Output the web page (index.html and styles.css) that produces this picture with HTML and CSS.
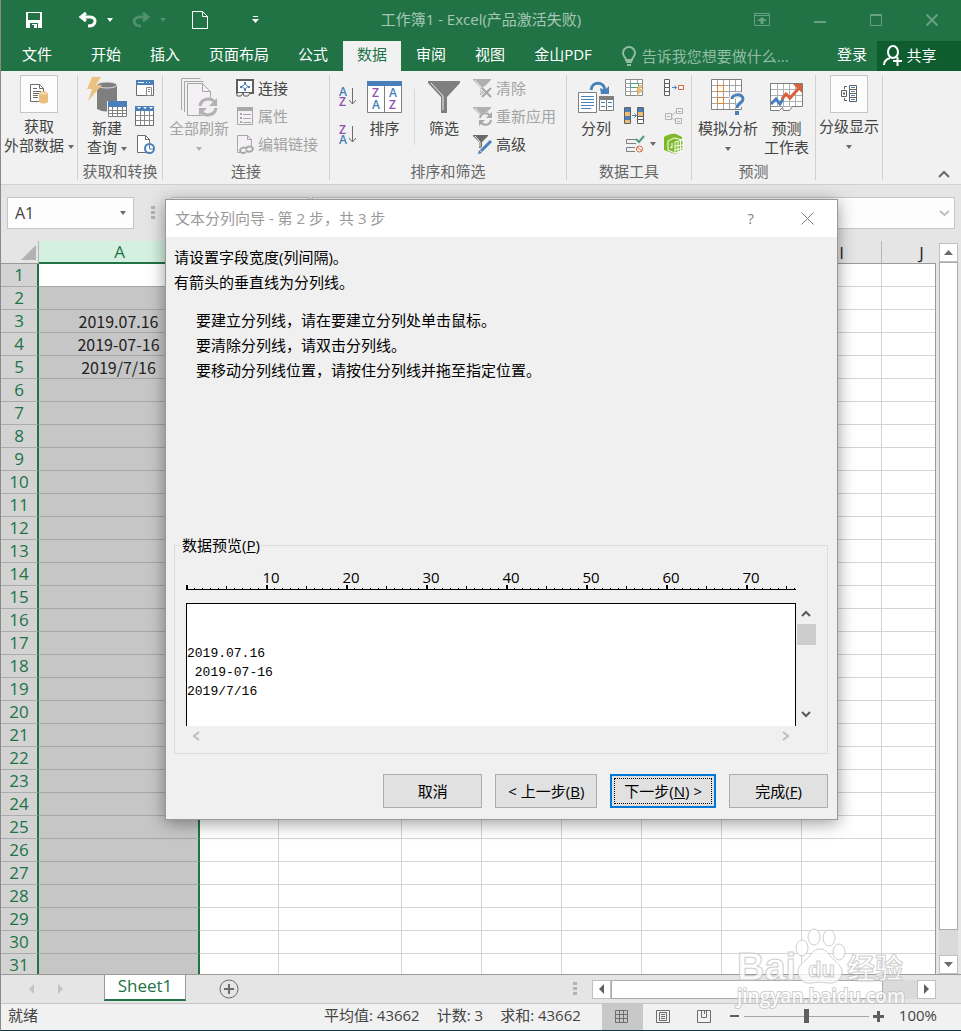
FILE: index.html
```html
<!DOCTYPE html>
<html lang="zh-CN">

<head>
    <meta charset="UTF-8">
    <meta name="viewport" content="width=device-width, initial-scale=1.0">
    <title>工作簿1 - Excel</title>
    <link rel="stylesheet" href="styles.css">
</head>

<body>
    <header class="titlebar">
        <div class="quick-access">
            <button type="button" aria-label="保存">
                <svg width="16" height="16" viewBox="0 0 16 16"><path d="M0 0h16v16H0z" fill="#fff"/><path d="M2 1h12v7H2zM4 11h8v5H4z" fill="#217346"/><path d="M6 12h5v4H8v-2H6z" fill="#fff"/><path d="M6 13h2v3H6z" fill="#217346"/></svg>
            </button>
            <button type="button" class="undo" aria-label="撤消">
                <svg width="20" height="16" viewBox="0 0 20 16" fill="none" stroke="#fff" stroke-width="3"><path d="M3 5h9c7 0 7 9-2 9"/><path d="M8 1L3 5l5 4" stroke-width="3"/></svg>
                <span class="caret light"></span>
            </button>
            <button type="button" class="redo" aria-label="恢复">
                <svg width="20" height="16" viewBox="0 0 20 16" fill="none" stroke="#4f9070" stroke-width="3"><path d="M17 5H9c-8 0-8 9 1 9"/><path d="M12 1l5 4-5 4"/></svg>
                <span class="caret dim"></span>
            </button>
            <button type="button" class="new" aria-label="新建">
                <svg width="16" height="18" viewBox="0 0 16 18" fill="none" stroke="#fff"><path d="M.5.5h10l5 5v12H.5zM10.500.5v5h5" /></svg>
            </button>
            <button type="button" class="customize" aria-label="自定义快速访问工具栏">
                <svg width="7" height="8" viewBox="0 0 7 8" fill="#fff"><path d="M1 0h5v1H1zM0 3h7L3.500 7z"/></svg>
            </button>
        </div>
        <h1>工作簿1 - Excel(产品激活失败)</h1>
        <div class="window-buttons">
            <button type="button" aria-label="功能区显示选项">
                <svg width="16" height="13" viewBox="0 0 16 13"><path d="M.5.5h15v12H.5zM1 2.500h14" fill="none" stroke="#67a183"/><path d="M8 4l5 4h-3.500v3h-3V8H3z" fill="#67a183"/></svg>
            </button>
            <button type="button" aria-label="最小化">
                <svg width="12" height="13" viewBox="0 0 12 13"><path d="M0 8h12v2H0z" fill="#67a183"/></svg>
            </button>
            <button type="button" aria-label="最大化">
                <svg width="12" height="12" viewBox="0 0 12 12"><path d="M.5.5h11v11H.5zM1 1.500h10" fill="none" stroke="#67a183"/></svg>
            </button>
            <button type="button" aria-label="关闭">
                <svg width="12" height="12" viewBox="0 0 12 12"><path d="M.5.5l11 11M11.500.5l-11 11" stroke="#67a183" stroke-width="2"/></svg>
            </button>
        </div>
    </header>

    <nav class="tabs">
        <a href="#" class="file">文件</a>
        <a href="#">开始</a>
        <a href="#">插入</a>
        <a href="#">页面布局</a>
        <a href="#">公式</a>
        <a href="#" class="active">数据</a>
        <a href="#">审阅</a>
        <a href="#">视图</a>
        <a href="#">金山PDF</a>
        <label class="tell-me">
            <svg width="14" height="19" viewBox="0 0 14 19" fill="none" stroke="#91bda4" stroke-width="2"><path d="M4 13c0-3-3-3-3-7a6 6 0 0 1 12 0c0 4-3 4-3 7zM4 15h6M5 18h4"/></svg>
            <input type="text" placeholder="告诉我您想要做什么..." aria-label="告诉我您想要做什么">
        </label>
        <a href="#" class="login">登录</a>
        <button type="button" class="share">
            <svg width="20" height="21" viewBox="0 0 20 21" fill="none" stroke="#fff" stroke-width="2"><ellipse cx="10" cy="7" rx="5" ry="6"/><path d="M1 20c0-4 3-6 6-7M10 16h9M14.500 12v9"/></svg>
            共享
        </button>
    </nav>

    <section class="ribbon">
        <div class="group external">
            <div class="tools">
                <button type="button" class="big boxed">
                    <span class="icon-box">
                        <svg width="18" height="20" viewBox="0 0 18 20"><path d="M.5.5h9l4 4v13H.5z" fill="#fff" stroke="#6d6d6d"/><path d="M9.500.5v4h4M3 7.500h8M3 9.500h8M3 11.500h5M3 13.500h5M3 4.500h4" fill="none" stroke="#6d6d6d"/><path d="M9 9h9v9q-4 3-9 0z" fill="#e8bf7c"/><ellipse cx="13.500" cy="9.500" rx="4" ry="1.500" fill="#f6deb4" stroke="#e8bf7c"/></svg>
                    </span>
                    <span>获取</span>
                    <span>外部数据<i class="caret"></i></span>
                </button>
            </div>
        </div>

        <div class="group transform">
            <div class="tools">
                <button type="button" class="big">
                    <span class="icon">
                        <svg width="40" height="40" viewBox="0 0 40 40"><path d="M10 8v24q9 5 20 0V8z" fill="#7f7f7f"/><ellipse cx="20" cy="8" rx="10" ry="3" fill="#7f7f7f" stroke="#dcdcdc"/><path d="M5 0h9L9 8h6L1 24l4-12H0z" fill="#eac282"/><path d="M20 24h20v16H20z" fill="#f0f0f0"/><path d="M21.500 25.500h18v14h-18z" fill="#fff" stroke="#7f7f7f"/><path d="M21 24h19v6H21z" fill="#4a80b9"/><path d="M22 33.500h17M22 36.500h17M25.500 30v9M30.500 30v9M35.500 30v9" stroke="#7f7f7f"/></svg>
                    </span>
                    <span>新建</span>
                    <span>查询<i class="caret"></i></span>
                </button>
                <div class="stack">
                    <button type="button" class="small" aria-label="显示查询">
                        <svg width="20" height="18" viewBox="0 0 20 18"><path d="M1.500 1.500h17v15h-17z" fill="#fff" stroke="#6d6d6d"/><path d="M1 1h18v5H1z" fill="#4a80b9"/><path d="M3 3h6v1H3zM11 3h1v1h-1zM14 3h1v1h-1z" fill="#fff"/><path d="M11.500 8.500h5v8h-5zM13 10.500h2M13 12.500h2" fill="none" stroke="#8a8a8a"/></svg>
                    </button>
                    <button type="button" class="small" aria-label="从表格">
                        <svg width="20" height="20" viewBox="0 0 20 20"><path d="M.5.5h18v19H.5z" fill="#fff" stroke="#6d6d6d"/><path d="M0 0h19v5H0z" fill="#4a80b9"/><path d="M2 1h4L4 3zM8 1h4l-2 2zM14 1h4l-2 2z" fill="#fff"/><path d="M1 9.500h17M1 14.500h17M5.500 5v14M9.500 5v14M14.500 5v14" stroke="#8a8a8a"/></svg>
                    </button>
                    <button type="button" class="small" aria-label="最近使用的源">
                        <svg width="20" height="20" viewBox="0 0 20 20"><path d="M2.500 1.500h8l4 4v13h-12z" fill="#fff" stroke="#6d6d6d"/><path d="M10.500 1.500v4h4" fill="none" stroke="#6d6d6d"/><circle cx="14.500" cy="14.500" r="4.500" fill="#fff" stroke="#4a80b9" stroke-width="2"/><path d="M14.500 11v4H18" fill="none" stroke="#4a80b9"/></svg>
                    </button>
                </div>
            </div>
            <h2>获取和转换</h2>
        </div>

        <div class="group links">
            <div class="tools">
                <button type="button" class="big" disabled>
                    <span class="icon">
                        <svg width="37" height="38" viewBox="0 0 37 38"><path d="M.5 32V.5h19M3.500 34V3.500h19" fill="none" stroke="#a8a8a8"/><path d="M6.500 5.500h15l8 8v24h-23z" fill="#f5f0f6" stroke="#a8a8a8"/><path d="M21.500 5.500v8h8" fill="none" stroke="#a8a8a8"/><circle cx="27" cy="29" r="10" fill="#f0f0f0"/><path d="M19 28c1-8 12-9 15-3M35 30c-1 8-12 9-15 3" fill="none" stroke="#b2b2b2" stroke-width="3"/><path d="M36 20v8h-8zM18 38v-8h8z" fill="#b2b2b2"/></svg>
                    </span>
                    <span>全部刷新</span>
                    <span><i class="caret alone pale"></i></span>
                </button>
                <div class="stack">
                    <button type="button" class="small">
                        <svg width="18" height="18" viewBox="0 0 18 18"><path d="M1 1h16v13H1z" fill="#fff" stroke="#5f5f5f" stroke-width="2"/><path d="M9 5l3 2.500L9 10 6 7.500z" fill="none" stroke="#4a80b9"/><path d="M8 3h2v2H8zM8 10h2v2H8zM4 7h2v2H4zM12 7h2v2h-2z" fill="#4a80b9"/><path d="M1 14v3h4l2-3 1 3h4l2-3" fill="#f1f1f1" stroke="#5f5f5f"/></svg>
                        连接
                    </button>
                    <button type="button" class="small" disabled>
                        <svg width="18" height="18" viewBox="0 0 18 18"><path d="M1.500.5h15v17h-15z" fill="#f5f0f6" stroke="#a8a8a8"/><path d="M1 0h16v4H1z" fill="#a8a8a8"/><path d="M7 7.500h8M7 11.500h8M7 15.500h8" stroke="#a8a8a8"/><path d="M4 6h2v2H4zM4 10h2v2H4zM4 14h2v2H4z" fill="#a8a8a8"/></svg>
                        属性
                    </button>
                    <button type="button" class="small" disabled>
                        <svg width="18" height="19" viewBox="0 0 18 19"><path d="M1.500 17.500V.5h10l4 4v7" fill="#f5f0f6" stroke="#a8a8a8"/><path d="M11.500.5v4h4M1.500 17.500h3" fill="none" stroke="#a8a8a8"/><path d="M10 17c-3 2-6 1-6-2 1-3 5-3 7-1M10 13c3-3 7-1 7 1-1 3-5 4-7 1" fill="none" stroke="#a8a8a8" stroke-width="2"/></svg>
                        编辑链接
                    </button>
                </div>
            </div>
            <h2>连接</h2>
        </div>

        <div class="group sort">
            <div class="tools">
                <div class="az-stack">
                    <button type="button" aria-label="升序">
                        <svg width="18" height="20" viewBox="0 0 18 20"><text x="0" y="9" class="az a">A</text><text x="0" y="19" class="az z">Z</text><path d="M13.500 1v16M10 13l3.500 4 3.500-4" fill="none" stroke="#6d6d6d"/></svg>
                    </button>
                    <button type="button" aria-label="降序">
                        <svg width="18" height="20" viewBox="0 0 18 20"><text x="0" y="9" class="az z">Z</text><text x="0" y="19" class="az a">A</text><path d="M13.500 1v16M10 13l3.500 4 3.500-4" fill="none" stroke="#6d6d6d"/></svg>
                    </button>
                </div>
                <button type="button" class="big">
                    <span class="icon">
                        <svg width="35" height="32" viewBox="0 0 35 32"><path d="M.5.5h34v31H.5z" fill="#fff" stroke="#7f7f7f"/><path d="M0 0h35v5H0z" fill="#4a80b9"/><path d="M17.500 5v26" stroke="#7f7f7f"/><text x="5" y="16" class="az z">Z</text><text x="5" y="28" class="az a">A</text><text x="22" y="16" class="az a">A</text><text x="22" y="28" class="az z">Z</text></svg>
                    </span>
                    <span>排序</span>
                </button>
                <div class="divider"></div>
                <button type="button" class="big filter">
                    <span class="icon">
                        <svg width="32" height="32" viewBox="0 0 32 32"><path d="M0 0h32v2L19 16v16h-6V16L0 2z" fill="#7f7f7f"/><path d="M3 2l12 13v14" fill="none" stroke="#f0f0f0" stroke-width="1"/></svg>
                    </span>
                    <span>筛选</span>
                </button>
                <div class="stack">
                    <button type="button" class="small" disabled>
                        <svg width="19" height="19" viewBox="0 0 19 19"><path d="M0 0h18v1l-7 7v8H7V8L0 1z" fill="#b0b0b0"/><path d="M2 1l6 7v7" fill="none" stroke="#f0f0f0"/><path d="M9 9l9 9M18 9l-9 9" stroke="#f0f0f0" stroke-width="4"/><path d="M9 9l9 9M18 9l-9 9" stroke="#a5a5a5" stroke-width="2"/></svg>
                        清除
                    </button>
                    <button type="button" class="small" disabled>
                        <svg width="19" height="19" viewBox="0 0 19 19"><path d="M0 0h18v1l-7 7v8H7V8L0 1z" fill="#b0b0b0"/><path d="M2 1l6 7v7" fill="none" stroke="#f0f0f0"/><circle cx="12.500" cy="12" r="7" fill="#f0f0f0"/><path d="M7 11c1-6 8-6 10-2M18 13c-1 6-8 6-10 2" fill="none" stroke="#a8a8a8" stroke-width="2"/><path d="M19 5v6h-6zM6 19v-6h6z" fill="#a8a8a8"/></svg>
                        重新应用
                    </button>
                    <button type="button" class="small">
                        <svg width="19" height="19" viewBox="0 0 19 19"><path d="M0 0h15v1L9 7v6H6V7L0 1z" fill="#6b6b6b"/><path d="M2 1l5 6v5" fill="none" stroke="#f0f0f0"/><path d="M18 6L7 17" stroke="#f0f0f0" stroke-width="5"/><path d="M18 6L8 16" stroke="#4a80b9" stroke-width="3"/><path d="M5 19l1-4 3 3z" fill="#4a80b9"/></svg>
                        高级
                    </button>
                </div>
            </div>
            <h2>排序和筛选</h2>
        </div>

        <div class="group data-tools">
            <div class="tools">
                <button type="button" class="big">
                    <span class="icon">
                        <svg width="36" height="32" viewBox="0 0 36 32"><path d="M.5 11.500h18v20H.5z" fill="#fff" stroke="#7f7f7f"/><path d="M3 15.500h13M3 18.500h13M3 21.500h13M3 24.500h13M3 27.500h10" stroke="#4a80b9"/><path d="M21.500 15.500h14v14h-14z" fill="#fff" stroke="#7f7f7f"/><path d="M21 15h15v4H21z" fill="#7f7f7f"/><path d="M28.500 19v10" stroke="#7f7f7f"/><path d="M23 21.500h4M23 25.500h4M30 21.500h4M30 25.500h4" stroke="#4a80b9"/><path d="M13 9c1-9 13-9 14 0" fill="none" stroke="#4a80b9" stroke-width="3"/><path d="M22 7l5 2 4-4v8h-8z" fill="#4a80b9"/></svg>
                    </span>
                    <span>分列</span>
                </button>
                <div class="stack">
                    <button type="button" class="small" aria-label="快速填充">
                        <svg width="20" height="18" viewBox="0 0 20 18"><path d="M1.500.5h17v16h-17z" fill="#fff" stroke="#8a8a8a"/><path d="M1 4.500h17M1 8.500h17M1 12.500h17M6.500 1v15M13.500 1v15" stroke="#a5a5a5"/><path d="M6.500 4.500h8v4h-8z" fill="#fff" stroke="#4c9f7d"/><path d="M15 6h4l-3 4h4l-8 8 3-6h-3z" fill="#edbd72"/></svg>
                    </button>
                    <button type="button" class="small" aria-label="删除重复值">
                        <svg width="20" height="18" viewBox="0 0 20 18"><path d="M.5.5h6v16h-6zM13.500.5h6v16h-6z" fill="#fff" stroke="#5f5f5f"/><path d="M1 1h5v4H1zM1 9h5v4H1zM14 1h5v4h-5z" fill="#4a80b9"/><path d="M1 5h5v4H1zM1 13h5v3H1zM14 5h5v4h-5z" fill="#edbd72"/><path d="M14 9.500h5M14 12.500h5" stroke="#5f5f5f"/><path d="M8 8.500h4M10.500 6.500l2 2-2 2" fill="none" stroke="#4a80b9"/></svg>
                    </button>
                    <button type="button" class="small" aria-label="数据验证">
                        <svg width="20" height="18" viewBox="0 0 20 18"><path d="M2.500 4.500H12M2.500 4.500v4H12M2.500 12.500H11M2.500 12.500v4H11" fill="none" stroke="#7f7f7f"/><path d="M12 4l3 3 5-6" fill="none" stroke="#4c9f7d" stroke-width="2"/><circle cx="15.500" cy="14" r="3" fill="#fff" stroke="#d9603b" stroke-width="1"/><path d="M13 12l5 4" stroke="#d9603b"/></svg>
                        <i class="caret"></i>
                    </button>
                </div>
                <div class="stack">
                    <button type="button" class="small" aria-label="合并计算">
                        <svg width="22" height="18" viewBox="0 0 22 18"><path d="M1.500.5h5v16h-5zM2 4.500h4M2 8.500h4M2 12.500h4" fill="#fff" stroke="#5f5f5f"/><path d="M9 8.500h4M11.500 6.500l2 2-2 2" fill="none" stroke="#4a80b9"/><path d="M15.500 6.500h5v4h-5z" fill="#fff" stroke="#d9603b" stroke-width="1"/></svg>
                    </button>
                    <button type="button" class="small" disabled aria-label="关系">
                        <svg width="22" height="18" viewBox="0 0 22 18" fill="none" stroke="#b0b0b0"><path d="M2.500 6.500h6v6h-6zM13.500 1.500h6v5h-6zM12.500 11.500h6v5h-6zM8.500 9l5-5M8.500 10l4 4"/><path d="M4 9.500h3M15 4.500h3M14 14.500h3"/></svg>
                    </button>
                    <button type="button" class="small" aria-label="管理数据模型">
                        <svg width="22" height="20" viewBox="0 0 22 20"><path d="M1 3q7-4 12-3l6 3v13l-7 4-11-4z" fill="#7db928"/><path d="M5 7l6-3 9 2v10l-8 3-7-3z" fill="#7db928" stroke="#fff"/><path d="M12 8v11M12 8l8-2M12 12l8-1M12 16l8-2M15 8v10M17.500 7v10M9 9v5l-2-1" fill="none" stroke="#fff"/></svg>
                    </button>
                </div>
            </div>
            <h2>数据工具</h2>
        </div>

        <div class="group forecast">
            <div class="tools">
                <button type="button" class="big">
                    <span class="icon">
                        <svg width="35" height="36" viewBox="0 0 35 36"><path d="M.5.5h30v30H.5z" fill="#fff" stroke="#7f7f7f"/><path d="M6.500 1v29M12.500 1v29M18.500 1v29M24.500 1v29M1 6.500h29M1 12.500h29M1 18.500h29M1 24.500h29" stroke="#a5a5a5"/><path d="M6.500 6.500h6v6h-6zM6.500 18.500h6v6h-6z" fill="#fff" stroke="#e5802b"/><path d="M21 20c0-5 12-6 12 0 0 4-6 4-6 9" fill="none" stroke="#f0f0f0" stroke-width="6"/><path d="M21 20c0-5 11-6 11 0 0 4-6 4-6 9" fill="none" stroke="#4a80b9" stroke-width="3"/><path d="M24 32h4v4h-4z" fill="#4a80b9"/></svg>
                    </span>
                    <span>模拟分析</span>
                    <span><i class="caret alone"></i></span>
                </button>
                <button type="button" class="big">
                    <span class="icon">
                        <svg width="34" height="30" viewBox="0 0 34 30"><path d="M.5 1.500h32v23H.5z" fill="#fff" stroke="#7f7f7f"/><path d="M7.500 2v22M13.500 2v22M19.500 2v22M25.500 2v22M1 7.500h31M1 13.500h31M1 19.500h31" stroke="#b0b0b0"/><path d="M.5 25v3.500h9l3-3 1 3h6l3-4" fill="#fff" stroke="#7f7f7f"/><path d="M1 22l5-5 4 5 3-5" fill="none" stroke="#4a80b9" stroke-width="3"/><path d="M12 17l4-5 4 4 9-10" fill="none" stroke="#d9603b" stroke-width="3"/><path d="M23 2h9v9l-3-3-3-3z" fill="#d9603b"/></svg>
                    </span>
                    <span>预测</span>
                    <span>工作表</span>
                </button>
            </div>
            <h2>预测</h2>
        </div>

        <div class="group outline">
            <div class="tools">
                <button type="button" class="big boxed">
                    <span class="icon-box">
                        <svg width="18" height="18" viewBox="0 0 18 18" fill="none" stroke="#5f5f5f"><path d="M9.500.5h7v16h-7zM10 4.500h6M10 8.500h6M10 12.500h6" fill="#fff"/><path d="M7 1.500H4.500V4M7 15.500H4.500V13M1.500 5.500h5v6h-5zM3 8.500h2M4 7v3"/><path d="M11 2.500h4M11 6.500h4M11 10.500h4M11 14.500h4" stroke="#4a80b9"/></svg>
                    </span>
                    <span>分级显示</span>
                    <span><i class="caret alone"></i></span>
                </button>
            </div>
        </div>

        <button type="button" class="collapse" aria-label="折叠功能区">
            <svg width="12" height="8" viewBox="0 0 12 8"><path d="M1 7l5-5 5 5" fill="none" stroke="#6a6a6a" stroke-width="2"/></svg>
        </button>
    </section>

    <section class="formula-bar">
        <label class="name-box">
            <input type="text" value="A1" aria-label="名称框">
            <i class="caret"></i>
        </label>
        <span class="dots"></span>
        <div class="formula-buttons"></div>
        <label class="formula-input">
            <input type="text" aria-label="编辑栏">
            <svg width="9" height="7" viewBox="0 0 9 7"><path d="M0 1l4.500 4L9 1" fill="none" stroke="#bdbdbd" stroke-width="2"/></svg>
        </label>
    </section>

    <main class="sheet-area">
        <div class="sheet">
            <table>
                <colgroup>
                    <col class="col-head">
                    <col class="col-a">
                    <col class="col-b">
                    <col class="col-c">
                    <col class="col-std" span="7">
                </colgroup>
                <thead>
                    <tr>
                        <th class="corner"><svg width="15" height="15" viewBox="0 0 15 15"><path d="M15 0v15H0z" fill="#b2b2b2"/></svg></th>
                        <th class="selected">A</th>
                        <th>B</th>
                        <th>C</th>
                        <th>D</th>
                        <th>E</th>
                        <th>F</th>
                        <th>G</th>
                        <th>H</th>
                        <th>I</th>
                        <th>J</th>
                    </tr>
                </thead>
                <tbody id="rows"></tbody>
            </table>
        </div>
        <div class="vscroll">
            <button type="button" aria-label="向上滚动"><svg width="9" height="5" viewBox="0 0 9 5"><path d="M4.500 0L9 5H0z" fill="#6a6a6a"/></svg></button>
            <div class="thumb"></div>
            <div class="track"></div>
            <button type="button" aria-label="向下滚动"><svg width="9" height="5" viewBox="0 0 9 5"><path d="M4.500 5L9 0H0z" fill="#6a6a6a"/></svg></button>
        </div>
    </main>

    <section class="sheet-tabs">
        <div class="sheet-nav">
            <svg width="5" height="10" viewBox="0 0 5 10"><path d="M5 0v10L0 5z" fill="#c3c3c3"/></svg>
            <svg width="5" height="10" viewBox="0 0 5 10"><path d="M0 0v10l5-5z" fill="#c3c3c3"/></svg>
        </div>
        <a href="#" class="sheet-tab">Sheet1</a>
        <button type="button" class="add-sheet" aria-label="新工作表">
            <svg width="20" height="20" viewBox="0 0 20 20" fill="none" stroke="#6d6d6d"><circle cx="10" cy="10" r="9" stroke-width="1"/><path d="M5 10h10M10 5v10" stroke-width="2"/></svg>
        </button>
        <span class="dots"></span>
        <div class="hscroll">
            <button type="button" aria-label="向左滚动"><svg width="5" height="10" viewBox="0 0 5 10"><path d="M5 0v10L0 5z" fill="#5f5f5f"/></svg></button>
            <div class="thumb"></div>
            <div class="track"></div>
            <button type="button" aria-label="向右滚动"><svg width="5" height="10" viewBox="0 0 5 10"><path d="M0 0v10l5-5z" fill="#5f5f5f"/></svg></button>
        </div>
    </section>

    <footer class="status">
        <span class="ready">就绪</span>
        <div class="totals">
            <span>平均值: 43662</span>
            <span>计数: 3</span>
            <span>求和: 43662</span>
        </div>
        <div class="views">
            <button type="button" class="active" aria-label="普通">
                <svg width="14" height="13" viewBox="0 0 14 13" fill="none" stroke="#6d6d6d"><path d="M.5.5h12v12H.5zM4.500 1v11M8.500 1v11M1 4.500h11M1 8.500h11"/></svg>
            </button>
            <button type="button" aria-label="页面布局">
                <svg width="14" height="13" viewBox="0 0 14 13" fill="none" stroke="#6d6d6d"><path d="M.5.5h13v12H.5zM3.500 2.500h7v8h-7zM5 4.500h4M5 6.500h4M5 8.500h4"/></svg>
            </button>
            <button type="button" aria-label="分页预览">
                <svg width="14" height="13" viewBox="0 0 14 13" fill="none" stroke="#6d6d6d"><path d="M.5.5h13v12H.5zM4.500 1v6.500h5V1M7.500 1v3"/></svg>
            </button>
        </div>
        <div class="zoom">
            <button type="button" aria-label="缩小"><svg width="10" height="10" viewBox="0 0 10 10"><path d="M0 4h9v2H0z" fill="#5f5f5f"/></svg></button>
            <input type="range" min="0" max="100" value="50" aria-label="缩放">
            <button type="button" aria-label="放大"><svg width="11" height="11" viewBox="0 0 11 11"><path d="M0 4h4V0h3v4h4v3H7v4H4V7H0z" fill="#5f5f5f"/></svg></button>
            <span class="percent">100%</span>
        </div>
    </footer>

    <div class="dialog" role="dialog" aria-labelledby="wizard-title">
        <div class="dialog-title">
            <span id="wizard-title">文本分列向导 - 第 2 步，共 3 步</span>
            <button type="button" class="help" aria-label="帮助">?</button>
            <button type="button" class="close" aria-label="关闭">
                <svg width="13" height="13" viewBox="0 0 13 13"><path d="M.5.5l12 12M12.500.5l-12 12" stroke="#7f7f7f"/></svg>
            </button>
        </div>
        <div class="dialog-body">
            <p>请设置字段宽度(列间隔)。<br>有箭头的垂直线为分列线。</p>
            <p class="hints">要建立分列线，请在要建立分列处单击鼠标。<br>要清除分列线，请双击分列线。<br>要移动分列线位置，请按住分列线并拖至指定位置。</p>
            <fieldset>
                <legend>数据预览(<u>P</u>)</legend>
                <div class="preview">
                    <div class="ruler">
                        <span>10</span>
                        <span>20</span>
                        <span>30</span>
                        <span>40</span>
                        <span>50</span>
                        <span>60</span>
                        <span>70</span>
                    </div>
                    <pre>2019.07.16
 2019-07-16
2019/7/16</pre>
                    <div class="preview-vscroll">
                        <svg width="10" height="7" viewBox="0 0 10 7"><path d="M1 6l4-4 4 4" fill="none" stroke="#5a5a5a" stroke-width="2"/></svg>
                        <div class="preview-thumb"></div>
                        <svg width="10" height="7" viewBox="0 0 10 7"><path d="M1 1l4 4 4-4" fill="none" stroke="#5a5a5a" stroke-width="2"/></svg>
                    </div>
                    <div class="preview-hscroll">
                        <svg width="8" height="10" viewBox="0 0 8 10"><path d="M7 1L2 5l5 4" fill="none" stroke="#bdbdbd" stroke-width="2"/></svg>
                        <svg width="8" height="10" viewBox="0 0 8 10"><path d="M1 1l5 4-5 4" fill="none" stroke="#bdbdbd" stroke-width="2"/></svg>
                    </div>
                </div>
            </fieldset>
            <div class="actions">
                <button type="button">取消</button>
                <button type="button">&lt; 上一步(<u>B</u>)</button>
                <button type="button" class="default">下一步(<u>N</u>) &gt;</button>
                <button type="button">完成(<u>F</u>)</button>
            </div>
        </div>
    </div>

    <div class="watermark">
        <svg width="176" height="86" viewBox="0 0 176 86">
            <g fill="#fff" stroke="#c4c4c4">
                <text x="1" y="52" class="logo">Bai</text>
                <ellipse cx="66" cy="20" rx="6" ry="8"/>
                <ellipse cx="78" cy="9" rx="6" ry="8"/>
                <ellipse cx="93" cy="10" rx="6" ry="8"/>
                <ellipse cx="103" cy="24" rx="6" ry="8"/>
                <path d="M84 21c-7 0-9 6-13 10-5 4-9 7-9 13 0 8 7 12 14 11 5-1 10-1 15 0 8 1 15-3 15-11 0-6-5-9-9-13-5-5-6-10-13-10z"/>
                <text x="72" y="49" class="logo-du">du</text>
                <text x="111" y="51" class="logo-cn">经验</text>
                <text x="1" y="75" class="logo-url">jingyan.baidu.com</text>
            </g>
        </svg>
    </div>

    <script src="script.js"></script>
</body>

</html>
```

FILE: styles.css
```css
* {
    box-sizing: border-box;
}

body {
    position: relative;
    display: flex;
    flex-direction: column;
    height: 100vh;
    margin: 0;
    overflow: hidden;
    border-left: 1px solid #8a8a8a;
    border-bottom: 1px solid #0d3b40;
    background-color: #e5e5e5;
    color: #444;
    font-family: "Open Sans", "Noto Sans CJK SC", sans-serif;
    font-size: 15px;
    line-height: 19px;
}

button, input {
    margin: 0;
    padding: 0;
    border: none;
    background: none;
    color: inherit;
    font: inherit;
}

button {
    display: flex;
    align-items: center;
    justify-content: center;
}

a {
    color: inherit;
    text-decoration: none;
}

svg {
    display: block;
    flex: none;
    overflow: visible;
}

h1, h2, p, pre {
    margin: 0;
    font-weight: normal;
}

.caret {
    display: inline-block;
    border: 3px solid transparent;
    border-top: 4px solid #6a6a6a;
    border-bottom: none;
    vertical-align: middle;
}

.caret.light {
    border-top-color: #fff;
}

.caret.dim {
    border-top-color: #4f9070;
}

.caret.pale {
    border-top-color: #b0b0b0;
}

.dots {
    width: 4px;
    height: 14px;
    background: repeating-linear-gradient(#b2b2b2 0 3px, transparent 3px 5px);
}

/* title bar */
.titlebar {
    display: grid;
    grid-template-columns: 1fr auto 1fr;
    align-items: center;
    flex: none;
    height: 41px;
    padding-bottom: 2px;
    background-color: #217346;
    color: #a6c7b5;
}

.titlebar h1 {
    font-size: 15px;
}

.quick-access {
    display: flex;
    align-items: center;
    padding-left: 25px;
}

.quick-access button {
    gap: 9px;
}

.undo {
    padding-left: 36px;
}

.redo {
    padding-left: 18px;
}

.new {
    padding-left: 26px;
}

.customize {
    padding-left: 44px;
}

.window-buttons {
    display: flex;
    justify-content: flex-end;
    gap: 44px;
    padding-right: 23px;
}

/* tabs */
.tabs {
    display: flex;
    flex: none;
    gap: 1px;
    height: 30px;
    background-color: #217346;
    color: #fff;
    line-height: 26px;
}

.tabs a {
    padding: 0 14px;
    white-space: nowrap;
}

.tabs .file {
    padding: 0 24px 0 21px;
}

.tabs .active {
    background-color: #f1f1f1;
    color: #217346;
}

.tell-me {
    display: flex;
    flex: 1;
    align-items: center;
    gap: 6px;
    min-width: 0;
    padding-left: 15px;
}

.tell-me input {
    flex: 1;
    min-width: 0;
}

.tell-me input::placeholder {
    color: #91bda4;
    opacity: 1;
}

.tabs .login {
    padding: 0 9px;
}

.share {
    gap: 3px;
    width: 84px;
    padding: 0 18px 2px 0;
    background-color: #0f5c2e;
}

/* ribbon */
.ribbon {
    display: flex;
    flex: none;
    height: 114px;
    padding: 4px 0;
    border-bottom: 1px solid #d0d0d0;
    background-color: #f1f1f1;
}

.group {
    display: flex;
    flex: none;
    flex-direction: column;
    border-right: 1px solid #d0d0d0;
}

.group h2 {
    color: #666;
    font-size: 15px;
    line-height: 17px;
    text-align: center;
}

.tools {
    display: flex;
    flex: 1;
}

.external {
    width: 77px;
}

.transform {
    width: 85px;
}

.links {
    width: 167px;
}

.sort {
    width: 237px;
}

.data-tools {
    width: 125px;
}

.forecast {
    width: 124px;
}

.outline {
    width: 67px;
}

.big {
    flex-direction: column;
    justify-content: flex-start;
    white-space: nowrap;
}

.big span {
    min-height: 19px;
}

.big .caret {
    margin-left: 4px;
}

.big .alone {
    margin-left: 0;
}

.big .icon {
    display: flex;
    align-items: center;
    height: 44px;
}

.boxed {
    flex: 1;
}

.big .icon-box {
    display: flex;
    align-items: center;
    justify-content: center;
    width: 38px;
    height: 38px;
    margin-bottom: 4px;
    border: 1px solid #c6c6c6;
    background-color: #fcfcfc;
}

button:disabled {
    color: #a3a3a3;
}

.stack {
    display: flex;
    flex-direction: column;
}

.small {
    justify-content: flex-start;
    gap: 4px;
    height: 28px;
    padding-bottom: 2px;
    white-space: nowrap;
}

.transform .tools {
    gap: 8px;
    padding-left: 9px;
}

.links .tools {
    gap: 7px;
    padding-left: 6px;
}

.sort .tools {
    padding-left: 9px;
}

.sort .filter {
    padding: 0 13px;
}

.data-tools .tools {
    gap: 10px;
    padding-left: 11px;
}

.data-tools .stack + .stack {
    margin-left: -3px;
}

.data-tools .small {
    gap: 6px;
}

.forecast .tools {
    gap: 6px;
    padding-left: 6px;
}

.az-stack {
    display: flex;
    flex-direction: column;
    gap: 18px;
    padding: 12px 10px 0 0;
}

.az {
    font-family: "Open Sans", sans-serif;
    font-size: 12px;
    font-weight: 600;
}

.az.a {
    fill: #4a80b9;
}

.az.z {
    fill: #8e4fae;
}

.divider {
    width: 1px;
    height: 56px;
    margin: 14px 0 0 12px;
    background-color: #d8d8d8;
}

.collapse {
    align-self: flex-end;
    margin-left: auto;
    padding: 0 11px 2px 0;
}

/* formula bar */
.formula-bar {
    display: flex;
    flex: none;
    align-items: center;
    height: 56px;
    padding: 0 6px;
}

.name-box, .formula-input, .formula-buttons {
    display: flex;
    align-items: center;
    height: 32px;
    border: 1px solid #c6c6c6;
    background-color: #fdfdfd;
}

.name-box {
    width: 127px;
    padding: 0 7px;
    font-size: 16px;
}

.name-box input, .formula-input input {
    flex: 1;
    min-width: 0;
}

.formula-bar .dots {
    margin: 0 17px;
}

.formula-buttons {
    width: 137px;
    margin-right: 3px;
}

.formula-input {
    flex: 1;
    padding-right: 5px;
}

/* sheet */
.sheet-area {
    display: flex;
    flex: 1;
    gap: 3px;
    min-height: 0;
    padding-right: 3px;
}

.sheet {
    position: relative;
    flex: 1;
    min-width: 0;
    overflow: hidden;
}

.sheet::after {
    content: "";
    position: absolute;
    top: 22px;
    right: 0;
    bottom: 0;
    width: 1px;
    background-color: #999;
}

table {
    width: 0;
    table-layout: fixed;
    border-spacing: 0;
    color: #222;
    font-family: "Noto Sans CJK SC", sans-serif;
    font-size: 16px;
    line-height: 22px;
}

.col-head {
    width: 38px;
}

.col-a {
    width: 161px;
}

.col-b {
    width: 79px;
}

.col-c {
    width: 123px;
}

.col-std {
    width: 80px;
}

th, td {
    height: 23px;
    padding: 0;
    overflow: hidden;
    border-right: 1px solid #d4d4d4;
    border-bottom: 1px solid #d4d4d4;
    text-align: center;
    white-space: nowrap;
}

td {
    background-color: #fff;
}

th {
    font-family: "Open Sans", sans-serif;
    font-size: 17px;
    font-weight: normal;
}

thead th {
    border-right-color: #b5b5b5;
    border-bottom-color: #999;
    background-color: #e5e5e5;
    color: #222;
    line-height: 21px;
}

thead .selected {
    border-right: none;
    border-bottom: 2px solid #217346;
    background-color: #d3f0e0;
    color: #217346;
}

.corner svg {
    margin-left: 20px;
}

tbody th {
    border-right: 2px solid #217346;
    border-bottom-color: #ababab;
    background-color: #d3d3d3;
    color: #217346;
}

td.selected {
    border-right: 2px solid #217346;
    border-bottom-color: #a6a6a6;
    background-color: #c6c6c6;
}

td.current {
    background-color: #fff;
}

.vscroll {
    display: flex;
    flex-direction: column;
    width: 19px;
    padding-top: 2px;
}

.vscroll button, .hscroll button {
    flex: none;
    width: 19px;
    height: 19px;
    border: 1px solid #c0c0c0;
    background-color: #fff;
}

.vscroll .thumb {
    flex: 27;
    border: 1px solid #ababab;
    background-color: #fff;
}

.vscroll .track {
    flex: 1;
    background-color: #dadada;
}

/* sheet tabs */
.sheet-tabs {
    display: flex;
    flex: none;
    align-items: center;
    height: 29px;
    padding-right: 25px;
    border-top: 1px solid #999;
}

.sheet-nav {
    display: flex;
    gap: 24px;
    width: 103px;
    padding-left: 28px;
}

.sheet-tab {
    align-self: flex-start;
    width: 82px;
    height: 26px;
    border-right: 1px solid #999;
    border-bottom: 2px solid #217346;
    border-left: 1px solid #999;
    background-color: #fff;
    color: #217346;
    font-size: 17px;
    line-height: 21px;
    text-align: center;
}

.add-sheet {
    margin-left: 33px;
}

.sheet-tabs .dots {
    margin-left: auto;
}

.hscroll {
    display: flex;
    width: 344px;
    margin-left: 15px;
}

.hscroll .thumb {
    flex: 8;
    border: 1px solid #ababab;
    background-color: #fff;
}

.hscroll .track {
    flex: 1;
    background-color: #dadada;
}

/* status bar */
.status {
    display: flex;
    flex: none;
    align-items: center;
    height: 27px;
    padding-right: 24px;
    border-top: 1px solid #c6c6c6;
    background-color: #f1f1f1;
    line-height: 23px;
    white-space: nowrap;
}

.ready, .totals, .percent {
    align-self: flex-start;
}

.ready {
    padding-left: 7px;
}

.totals {
    display: flex;
    flex: 1;
    justify-content: flex-end;
    gap: 17px;
    padding-right: 21px;
}

.views {
    display: flex;
    align-self: stretch;
}

.views button {
    width: 41px;
    padding-bottom: 2px;
}

.views .active {
    background-color: #c8c8c8;
}

.zoom {
    display: flex;
    align-items: center;
    align-self: stretch;
    gap: 4px;
    padding: 0 0 2px 5px;
}

.zoom input {
    width: 125px;
    height: 14px;
    appearance: none;
    background: linear-gradient(#a5a5a5, #a5a5a5) center / 100% 1px no-repeat;
}

.zoom input::-webkit-slider-thumb {
    width: 5px;
    height: 14px;
    appearance: none;
    background-color: #5f5f5f;
}

.percent {
    padding-left: 11px;
}

/* text to columns wizard */
.dialog {
    position: absolute;
    top: 199px;
    left: 164px;
    width: 673px;
    border: 1px solid #999;
    background-color: #f0f0f0;
    box-shadow: 0 3px 16px rgba(0, 0, 0, 0.4);
    color: #000;
}

.dialog-title {
    display: flex;
    align-items: center;
    height: 37px;
    padding: 0 23px 0 9px;
    background-color: #fff;
    color: #999;
}

.help {
    margin-left: auto;
    color: #7f7f7f;
}

.close {
    margin-left: 47px;
}

.dialog-body {
    padding: 8px 9px 11px 8px;
    line-height: 25px;
}

.hints {
    padding: 13px 0 0 22px;
}

fieldset {
    min-width: 0;
    margin: 150px 0 0;
    padding: 0 11px 8px;
    border: 1px solid #dcdcdc;
}

legend {
    margin-left: -5px;
    padding: 0 1px;
}

.preview {
    display: grid;
    grid-template-columns: 1fr 20px;
}

.ruler {
    display: flex;
    grid-column: 1;
    height: 32px;
    padding: 8px 0 0 45px;
    background:
        linear-gradient(#000, #000) bottom / 100% 1px no-repeat,
        repeating-linear-gradient(90deg, #000 0 2px, transparent 2px 80px) bottom / 100% 5px no-repeat,
        repeating-linear-gradient(90deg, #000 0 1px, transparent 1px 40px) bottom / 100% 4px no-repeat,
        repeating-linear-gradient(90deg, #000 0 1px, transparent 1px 8px) bottom / 100% 2px no-repeat;
    line-height: 23px;
}

.ruler span {
    width: 80px;
    text-align: center;
}

pre {
    grid-row: 2;
    height: 123px;
    margin-top: 13px;
    padding-top: 40px;
    border: 1px solid #000;
    border-bottom: none;
    background-color: #fff;
    font-family: "Liberation Mono", monospace;
    font-size: 13px;
    line-height: 19px;
}

.preview-vscroll {
    display: flex;
    grid-row: 2;
    flex-direction: column;
    align-items: center;
    padding: 20px 0 8px;
}

.preview-thumb {
    width: 19px;
    height: 21px;
    margin: 7px 0 auto;
    background-color: #cdcdcd;
}

.preview-hscroll {
    display: flex;
    grid-row: 3;
    grid-column: 1;
    align-items: center;
    justify-content: space-between;
    height: 19px;
    padding: 0 6px;
}

.actions {
    display: flex;
    justify-content: flex-end;
    gap: 13px;
    margin-top: 20px;
}

.actions button {
    min-width: 99px;
    height: 34px;
    padding: 0 12px;
    border: 1px solid #adadad;
    background-color: #e1e1e1;
}

.actions .default {
    border: 2px solid #0078d7;
    outline: 1px dotted #000;
    outline-offset: -5px;
}

/* watermark */
.watermark {
    position: absolute;
    right: 49px;
    bottom: 16px;
    opacity: 0.8;
    pointer-events: none;
}

.logo, .logo-du, .logo-cn {
    font-family: "Liberation Sans", "Noto Sans CJK SC", sans-serif;
    font-weight: bold;
}

.logo {
    font-size: 38px;
}

.logo-du {
    font-size: 22px;
}

.logo-cn {
    font-size: 28px;
}

.logo-url {
    font-family: "Open Sans", sans-serif;
    font-size: 19px;
    font-weight: 600;
    paint-order: stroke;
    stroke-width: 2px;
}
```

FILE: script.js
```javascript
const rowsBody = document.getElementById('rows');
const values = { 3: '2019.07.16', 4: ' 2019-07-16', 5: '2019/7/16' };
const columnCount = 10;

for (let i = 1; i <= 31; i++) {
    const row = document.createElement('tr');

    const head = document.createElement('th');
    head.textContent = i;
    row.appendChild(head);

    for (let j = 0; j < columnCount; j++) {
        const cell = document.createElement('td');
        if (j === 0) {
            cell.classList.add('selected');
            cell.textContent = values[i] || '';
            // The active cell keeps a white background
            if (i === 1) {
                cell.classList.add('current');
            }
        }
        row.appendChild(cell);
    }

    rowsBody.appendChild(row);
}
```
